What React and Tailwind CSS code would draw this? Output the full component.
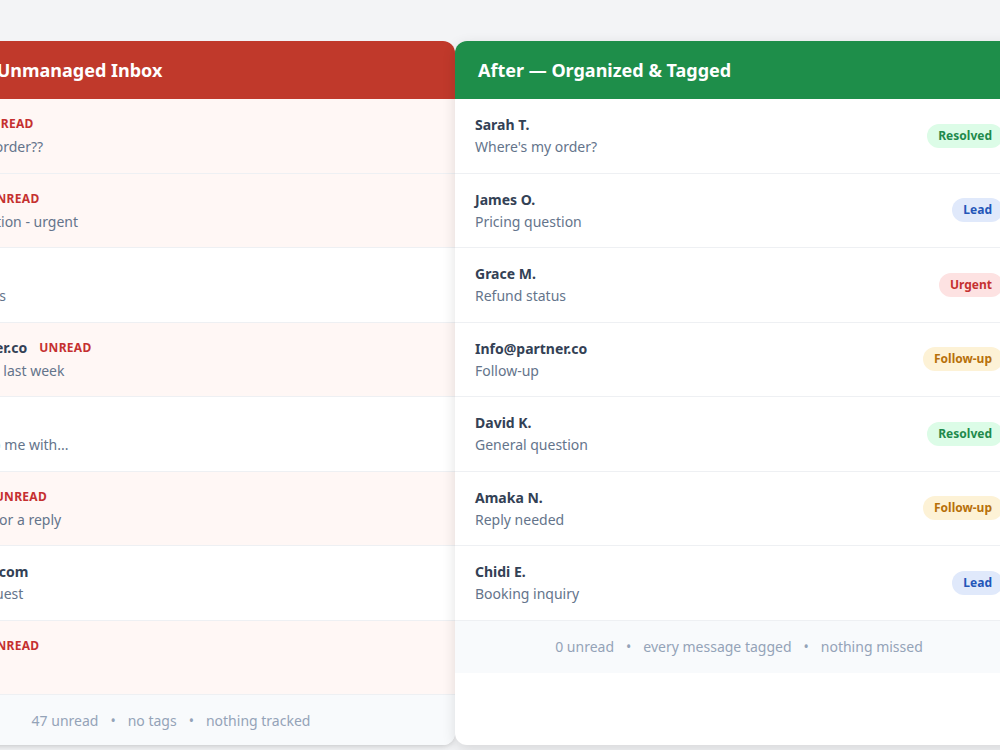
const left = [
  ["Sarah T.", true, "Where's my order??"],
  ["James O.", true, "Pricing question - urgent"],
  ["Grace M.", false, "Refund status"],
  ["Info@partner.co", true, "Follow-up on last week"],
  ["David K.", false, "Can you help me with..."],
  ["Amaka N.", true, "Still waiting for a reply"],
  ["chidi@shop.com", false, "Booking request"],
  ["Tunde A.", true, "Price inquiry"],
];
const right = [
  ["Sarah T.", "Where's my order?", "Resolved"],
  ["James O.", "Pricing question", "Lead"],
  ["Grace M.", "Refund status", "Urgent"],
  ["Info@partner.co", "Follow-up", "Follow-up"],
  ["David K.", "General question", "Resolved"],
  ["Amaka N.", "Reply needed", "Follow-up"],
  ["Chidi E.", "Booking inquiry", "Lead"],
];
const badge = {
  Resolved: "bg-[#dcfce7] text-[#1f8a4c]",
  Lead: "bg-[#e0e9fb] text-[#2456b8]",
  Urgent: "bg-[#fde2e2] text-[#c53030]",
  "Follow-up": "bg-[#fdf2d6] text-[#b7700a]",
};
export default function App() {
  return (
    <div className="w-[1000px] h-[750px] overflow-hidden bg-[#f3f4f6] [font-family:'DejaVu_Sans',sans-serif]">
      <div className="flex ml-[-113px] pt-[41px]">
        <div className="w-[568px] h-[704px] shrink-0 bg-white rounded-xl overflow-hidden shadow-md flex flex-col">
          <div className="h-[58px] bg-[#c0392b] text-white font-bold text-[18px] flex items-center px-[23px]">Before — Unmanaged Inbox</div>
          {left.map(([n, u, s], i) => (
            <div key={i} className={`h-[74.5px] border-b border-[#eef0f3] flex flex-col justify-center px-[28px] ${u ? "bg-[#fff7f5]" : "bg-white"}`}>
              <div className="flex items-center gap-3 h-[20px]">
                <span className="text-[14px] font-bold text-[#334155]">{n}</span>
                {u && <span className="text-[12px] font-bold text-[#c53030] tracking-wide">UNREAD</span>}
              </div>
              <div className="text-[14px] text-[#64748b] mt-[2px]">{s}</div>
            </div>
          ))}
          <div className="flex-1 bg-[#f8fafc] flex items-center justify-center text-[14px] text-[#94a3b8] gap-3">
            <span>47 unread</span><span>•</span><span>no tags</span><span>•</span><span>nothing tracked</span>
          </div>
        </div>
        <div className="w-[568px] h-[704px] shrink-0 bg-white rounded-xl overflow-hidden shadow-[0_4px_14px_rgba(0,0,0,0.12)] flex flex-col z-10">
          <div className="h-[58px] bg-[#1e8e4a] text-white font-bold text-[18px] flex items-center px-[23px]">After — Organized &amp; Tagged</div>
          {right.map(([n, s, t], i) => (
            <div key={i} className="h-[74.5px] border-b border-[#eef0f3] flex items-center justify-between px-[20px]">
              <div className="flex flex-col">
                <span className="text-[14px] font-bold text-[#334155] h-[20px]">{n}</span>
                <span className="text-[14px] text-[#64748b] mt-[2px]">{s}</span>
              </div>
              <span className={`text-[12px] font-bold rounded-full px-[11px] py-[3px] ${badge[t]}`}>{t}</span>
            </div>
          ))}
          <div className="h-[52px] bg-[#f8fafc] flex items-center justify-center text-[14px] text-[#94a3b8] gap-3">
            <span>0 unread</span><span>•</span><span>every message tagged</span><span>•</span><span>nothing missed</span>
          </div>
        </div>
      </div>
    </div>
  );
}
